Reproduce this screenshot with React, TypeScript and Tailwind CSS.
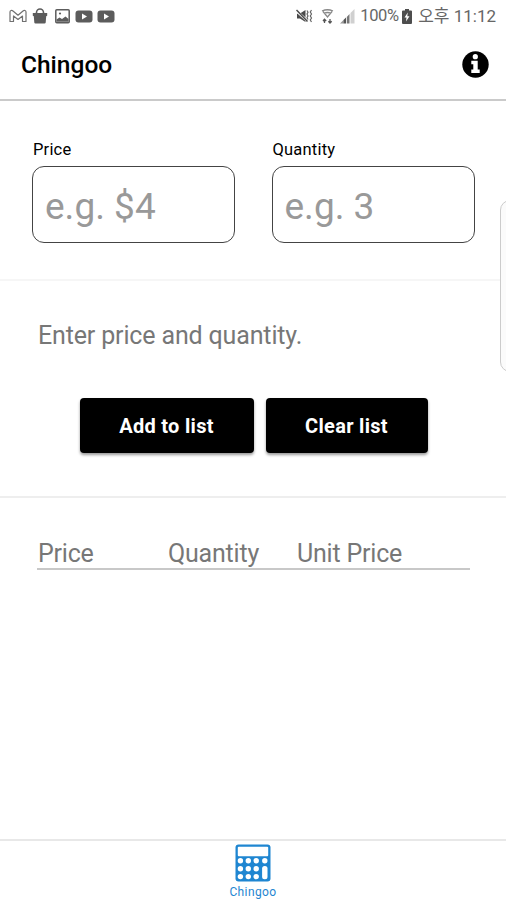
import { useState } from "react";

const MailIcon = () => (
  <svg width="18" height="14" viewBox="0 0 18 14" fill="none">
    <path
      d="M1 12.500V3c0-1.600 1.800-2 3-1l5 4.200L14 2c1.200-1 3-.6 3 1v9.500h-3.500V7L9 10.500 4.500 7v5.500z"
      stroke="#707070"
      strokeWidth="1.200"
      strokeLinejoin="round"
    />
  </svg>
);

const BagIcon = () => (
  <svg width="16" height="16" viewBox="0 0 16 16">
    <path d="M4.500 6V4.500a3.500 3.500 0 0 1 7 0V6" fill="none" stroke="#5c5c5c" strokeWidth="1.600" />
    <path d="M.8 5h14.400v2.800l-1 .4-.5 6.300q-.1 1-1.200 1h-9q-1.100 0-1.200-1L1.800 8.200l-1-.4z" fill="#5c5c5c" />
  </svg>
);

const PhotoIcon = () => (
  <svg width="15" height="15" viewBox="0 0 15 15">
    <rect x=".8" y=".8" width="13.400" height="13" rx="1" fill="none" stroke="#5c5c5c" strokeWidth="1.500" />
    <path d="M1.500 12.800v-2.300l3-2 2.500 1.500 3.500-2.500 3 2.500v2.800z" fill="#5c5c5c" />
    <circle cx="5" cy="4.500" r="1.100" fill="#5c5c5c" />
  </svg>
);

const VideoIcon = () => (
  <svg width="18" height="13" viewBox="0 0 18 13">
    <rect x=".5" y=".5" width="17" height="12" rx="3" fill="#5c5c5c" />
    <path d="M7 3.500v6l5-3z" fill="#fff" />
  </svg>
);

const MuteIcon = () => (
  <svg width="17" height="14" viewBox="0 0 17 14">
    <path d="M1 4.500h3L9.500 1v12L4 9.500H1z" fill="#4a4a4a" />
    <path d="M1 2.500l10 9" stroke="#fff" strokeWidth="2.400" />
    <path d="M.5 1l11 11.500" stroke="#4a4a4a" strokeWidth="1.500" />
    <path d="M11 1.500l1 1.800-1 1.800 1 1.800-1 1.800 1 1.800M15.500 1l-1.200 2 1.200 2-1.200 2 1.200 2-1.200 2 1.200 2" fill="none" stroke="#666" strokeWidth="1.200" />
  </svg>
);

const WifiIcon = () => (
  <svg width="13" height="15" viewBox="0 0 13 15" fill="none" stroke="#888" strokeWidth="1.300">
    <path d="M1 2q5.500-2.500 11 0M3 4.500q3.500-2 7 0M2 2.500l4.500 5.500L11 2.500" />
    <path d="M3.500 14v-3.500M2 12l1.500-1.700L5.200 12M9 10v4M7.400 12.300L9 14l1.700-1.700" stroke="#555" />
  </svg>
);

const SignalIcon = () => (
  <svg width="15" height="15" viewBox="0 0 15 15">
    <path d="M0 14.500l3.500-3.500v3.500z" fill="#999" />
    <path d="M3.500 14.500V11L6 8.500v6z" fill="#555" />
    <path d="M6.800 14.500V8L9.500 5v9.500z" fill="#777" />
    <path d="M10.500 14.500V4L14.500 0v14.500z" fill="#d0d0d0" />
  </svg>
);

const BatteryIcon = () => (
  <svg width="10" height="15" viewBox="0 0 10 15">
    <path d="M3 0h4v1.500h2q1 0 1 1V14q0 1-1 1H1q-1 0-1-1V2.500q0-1 1-1h2z" fill="#4d4d4d" />
    <path d="M5.800 3.500L2.500 8.500h2l-.5 4 3.500-5.200H5.300z" fill="#fff" />
  </svg>
);

const InfoIcon = () => (
  <svg width="27" height="27" viewBox="0 0 27 27">
    <circle cx="13.500" cy="13.500" r="13.200" fill="#000" />
    <circle cx="13.300" cy="5.700" r="2.600" fill="#fff" />
    <path d="M9.300 9.800h6.400v8.800h2v3.400H9.300v-3.400h2v-5.400h-2z" fill="#fff" />
  </svg>
);

const CalculatorIcon = () => (
  <svg width="36" height="38" viewBox="0 0 36 38">
    <rect x=".5" y=".5" width="35" height="37" rx="3" fill="#1f86d1" />
    <rect x="2.800" y="2.800" width="30.400" height="9.500" rx="1" fill="#fff" />
    {[16.8, 24.7, 32.6].map((cy) =>
      [5.4, 13.3, 21.2].map((cx) => <circle key={`${cx}-${cy}`} cx={cx} cy={cy} r="2.700" fill="#fff" />)
    )}
    <circle cx="29.800" cy="16.800" r="2.700" fill="#fff" />
    <rect x="27.100" y="22" width="5.400" height="13.300" rx="2.500" fill="#fff" />
  </svg>
);

interface FieldProps {
  label: string;
  placeholder: string;
  value: string;
  onChange: (value: string) => void;
}

const Field = ({ label, placeholder, value, onChange }: FieldProps) => (
  <label className="block w-[203px]">
    <span className="block h-[26px] pl-px text-[16.500px] leading-[19px] tracking-[0.2px] text-black">{label}</span>
    <input
      value={value}
      onChange={(e) => onChange(e.target.value)}
      placeholder={placeholder}
      className="block h-[77px] w-full rounded-[12px] border border-[#444] bg-white px-3 pt-1 text-[37px] text-black outline-none placeholder:text-[#999]"
    />
  </label>
);

const App = () => {
  const [price, setPrice] = useState("");
  const [quantity, setQuantity] = useState("");
  const [items, setItems] = useState<{ price: number; quantity: number }[]>([]);

  const handleAdd = () => {
    const p = Number(price);
    const q = Number(quantity);
    if (!p || !q) return;
    setItems([...items, { price: p, quantity: q }]);
    setPrice("");
    setQuantity("");
  };

  return (
    <div className="relative flex h-[900px] w-[506px] flex-col overflow-hidden bg-white font-[Roboto,'Noto_Sans_CJK_KR',sans-serif]">
      {/* Status bar */}
      <div className="flex h-8 shrink-0 items-center justify-between pr-[10px] pl-[9px]">
        <div className="flex items-center">
          <MailIcon />
          <span className="w-[5px]" />
          <BagIcon />
          <span className="w-[7px]" />
          <PhotoIcon />
          <span className="w-[5px]" />
          <VideoIcon />
          <span className="w-1" />
          <VideoIcon />
        </div>
        <div className="flex items-center text-[17px] leading-8 text-[#666]">
          <MuteIcon />
          <span className="w-2" />
          <WifiIcon />
          <span className="w-[6px]" />
          <SignalIcon />
          <span className="ml-[5px] w-[42px] text-[16.500px] tracking-[-0.3px] whitespace-nowrap">100%</span>
          <BatteryIcon />
          <span className="ml-[6px] whitespace-nowrap">오후 11:12</span>
        </div>
      </div>

      {/* Header */}
      <div className="flex h-[69px] shrink-0 items-center justify-between border-b-2 border-[#cacaca] pr-[17px] pl-[21px]">
        <h1 className="text-[24.500px] font-medium text-black">Chingoo</h1>
        <span className="mb-[2px]">
          <InfoIcon />
        </span>
      </div>

      {/* Inputs */}
      <div className="flex h-[180px] shrink-0 gap-[36.500px] border-b-2 border-[#f6f6f6] pt-[39px] pl-8">
        <Field label="Price" placeholder="e.g. $4" value={price} onChange={setPrice} />
        <Field label="Quantity" placeholder="e.g. 3" value={quantity} onChange={setQuantity} />
      </div>

      {/* Message and buttons */}
      <div className="h-[217px] shrink-0 border-b-2 border-[#eee] pt-[39px]">
        <p className="pl-[38px] text-[25px] leading-8 tracking-[-0.15px] text-[#777]">Enter price and quantity.</p>
        <div className="mt-[46px] flex gap-3 pl-[79.500px] text-[20px] font-bold tracking-[0.3px] text-white">
          <button
            onClick={handleAdd}
            className="h-[55px] w-[174px] rounded-[4px] bg-black shadow-[0_2px_3px_rgba(0,0,0,0.4)]"
          >
            Add to list
          </button>
          <button
            onClick={() => setItems([])}
            className="h-[55px] w-[162px] rounded-[4px] bg-black shadow-[0_2px_3px_rgba(0,0,0,0.4)]"
          >
            Clear list
          </button>
        </div>
      </div>

      {/* List */}
      <div className="grow overflow-hidden pt-[39px] pl-[37px] text-[25px] leading-8 tracking-[-0.2px] text-[#777]">
        <div className="grid w-[433px] grid-cols-[130px_130px_173px]">
          <div className="h-[33px] border-b-2 border-[#c8c8c8] pl-px leading-[33px]">Price</div>
          <div className="h-[33px] border-b-2 border-[#c8c8c8] pl-px leading-[33px]">Quantity</div>
          <div className="h-[33px] border-b-2 border-[#c8c8c8] leading-[33px]">Unit Price</div>
          {items.map((item, i) => (
            <div key={i} className="contents">
              <div>${item.price}</div>
              <div>{item.quantity}</div>
              <div>${(item.price / item.quantity).toFixed(2)}</div>
            </div>
          ))}
        </div>
      </div>

      {/* Tab bar */}
      <div className="flex h-[61px] shrink-0 flex-col items-center border-t-2 border-[#e8e8e8] pt-[3px]">
        <CalculatorIcon />
        <span className="mt-[3px] text-[12px] leading-[14px] tracking-[0.4px] text-[#1f86d1]">Chingoo</span>
      </div>

      {/* Edge panel handle */}
      <div className="absolute top-[200px] left-[500px] h-[172px] w-5 rounded-[10px] border border-[#ccc] bg-[#fbfbfb]" />
    </div>
  );
};

export default App;
